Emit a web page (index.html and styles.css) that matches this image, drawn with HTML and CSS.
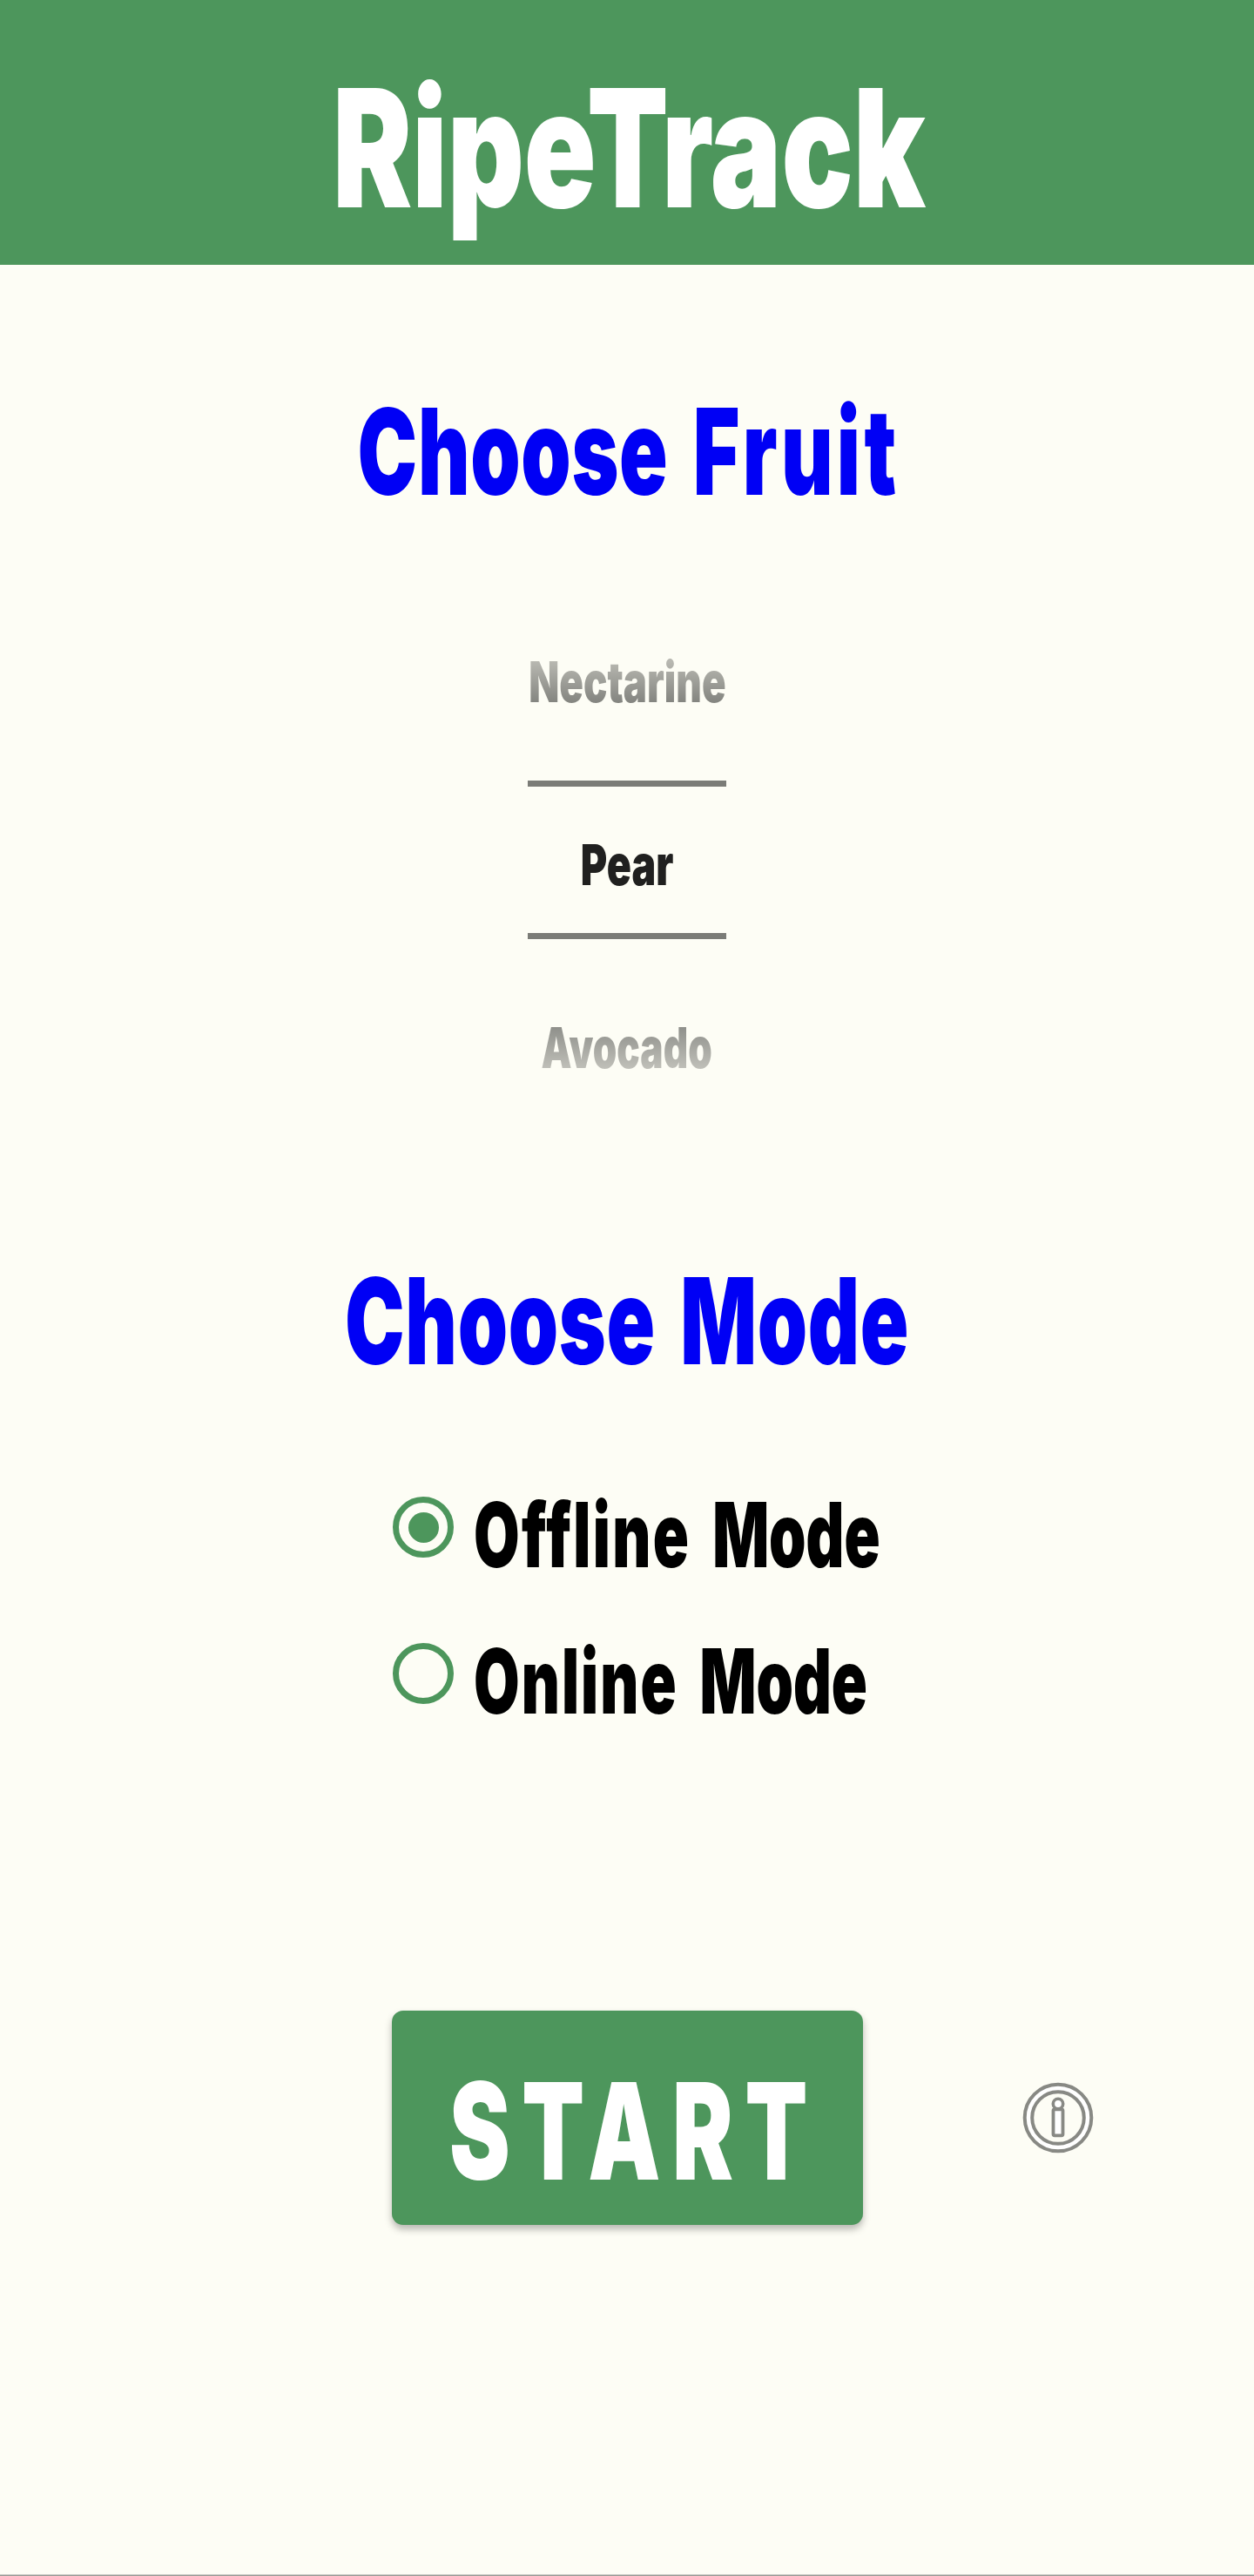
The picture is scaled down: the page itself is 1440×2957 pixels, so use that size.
FILE: index.html
```html
<!DOCTYPE html>
<html lang="en">
<head>
<meta charset="utf-8">
<title>RipeTrack</title>
<link rel="stylesheet" href="styles.css">
</head>
<body>
<header class="app-bar"><h1 class="brand">RipeTrack</h1></header>
<main class="content">
  <h2 class="heading heading-fruit">Choose <span class="fruit-word">Fruit</span></h2>
  <div class="picker">
    <div class="option option-prev"><span class="label label-nectarine">Nectarine</span></div>
    <div class="option-selected"><span class="label label-pear">Pear</span></div>
    <div class="option option-next"><span class="label label-avocado">Avocado</span></div>
  </div>
  <h2 class="heading heading-mode">Choose Mode</h2>
  <div class="modes">
    <div class="mode"><span class="radio radio-on"></span><span class="mode-label"><span class="offline">Offline</span> Mode</span></div>
    <div class="mode"><span class="radio"></span><span class="mode-label"><span class="online">Online</span> Mode</span></div>
  </div>
  <div class="actions">
    <button class="start"><span class="start-label">START</span></button>
    <svg class="info" viewBox="0 0 90 90" fill="none" stroke="#888984" stroke-width="4">
      <circle cx="45" cy="45" r="34.2" stroke="#ffffff" stroke-width="7"/>
      <circle cx="45" cy="45" r="38.3" stroke-width="4"/>
      <circle cx="45" cy="45" r="29.8" stroke-width="4"/>
      <circle cx="45" cy="29" r="5.7" fill="#fff" stroke-width="3.6"/>
      <rect x="39.5" y="35.3" width="11" height="30" rx="1.5" fill="#fff" stroke-width="3.8"/>
    </svg>
  </div>
</main>
<footer class="bottom-edge"></footer>
</body>
</html>
```
FILE: styles.css
```css
* { box-sizing: border-box; }
body {
  margin: 0;
  height: 2957px;
  display: flex;
  flex-direction: column;
  background: #fdfdf5;
  font-family: Inter, sans-serif;
  font-weight: 900;
  overflow-x: hidden;
}
h1, h2 { margin: 0; font-weight: 900; white-space: nowrap; }
.app-bar {
  height: 304px;
  padding: 35px 0 0 4px;
  background: #4d965c;
  display: flex;
  justify-content: center;
}
.brand { color: #fff; font-size: 188px; line-height: 269px; transform: scaleX(.7267); }
.content { display: flex; flex-direction: column; align-items: center; padding-top: 114px; }
.heading {
  color: #0000f5;
  font-size: 137.5px;
  line-height: 200px;
  letter-spacing: 1px;
  word-spacing: 14px;
  transform: scaleX(.668);
}
.heading-fruit { padding-left: 7px; }
.fruit-word { letter-spacing: 6.5px; }
.picker {
  display: flex;
  flex-direction: column;
  align-items: center;
  padding-top: 60px;
  margin-bottom: 109px;
  font-size: 64.6px;
}
.option { display: flex; line-height: 209px; }
.label { display: block; }
.label-nectarine {
  transform: scaleX(.706);
  color: transparent;
  background: linear-gradient(#b8b8b1 81px, #848580 128px);
  -webkit-background-clip: text;
  background-clip: text;
}
.label-avocado {
  transform: scaleX(.683);
  color: transparent;
  background: linear-gradient(#8f908b 81px, #bfbfb8 128px);
  -webkit-background-clip: text;
  background-clip: text;
}
.label-pear { transform: scaleX(.72); }
.option-selected {
  width: 228px;
  height: 182px;
  margin: 9px 0 20px;
  padding-top: 11px;
  border-top: 7px solid #7b7c77;
  border-bottom: 7px solid #7b7c77;
  display: flex;
  justify-content: center;
  line-height: 157px;
  color: #20201f;
}
.modes { width: 100%; padding: 62px 0 0 451px; }
.mode { height: 168px; display: flex; align-items: center; gap: 22.5px; }
.radio {
  width: 70px;
  height: 70px;
  margin-bottom: 18px;
  border: 7px solid #4d965c;
  border-radius: 50%;
  display: flex;
  align-items: center;
  justify-content: center;
  flex: none;
}
.radio-on::before { content: ""; width: 35px; height: 35px; border-radius: 50%; background: #4d965c; }
.mode-label {
  color: #000;
  font-size: 102.5px;
  line-height: 168px;
  white-space: nowrap;
  word-spacing: 17px;
  transform: scaleX(.663);
  transform-origin: left;
}
.offline { letter-spacing: 3.6px; }
.online { letter-spacing: 3.1px; }
.actions { width: 100%; padding: 294px 0 0 450px; display: flex; align-items: center; gap: 179px; }
.start {
  width: 541px;
  height: 246px;
  padding: 30px 0 0 65.5px;
  border: 0;
  border-radius: 13px;
  background: #4d965c;
  box-shadow: 0 5px 9px rgba(0, 0, 0, .28);
  color: #fff;
  font: 900 154px/216px Inter, sans-serif;
  text-align: left;
}
.start-label { display: block; letter-spacing: 20px; transform: scaleX(.68); transform-origin: left; }
.info { width: 90px; height: 90px; flex: none; }
.bottom-edge { height: 2px; margin-top: auto; background: linear-gradient(#c6c6c1 50%, #999a95 50%); }
```
